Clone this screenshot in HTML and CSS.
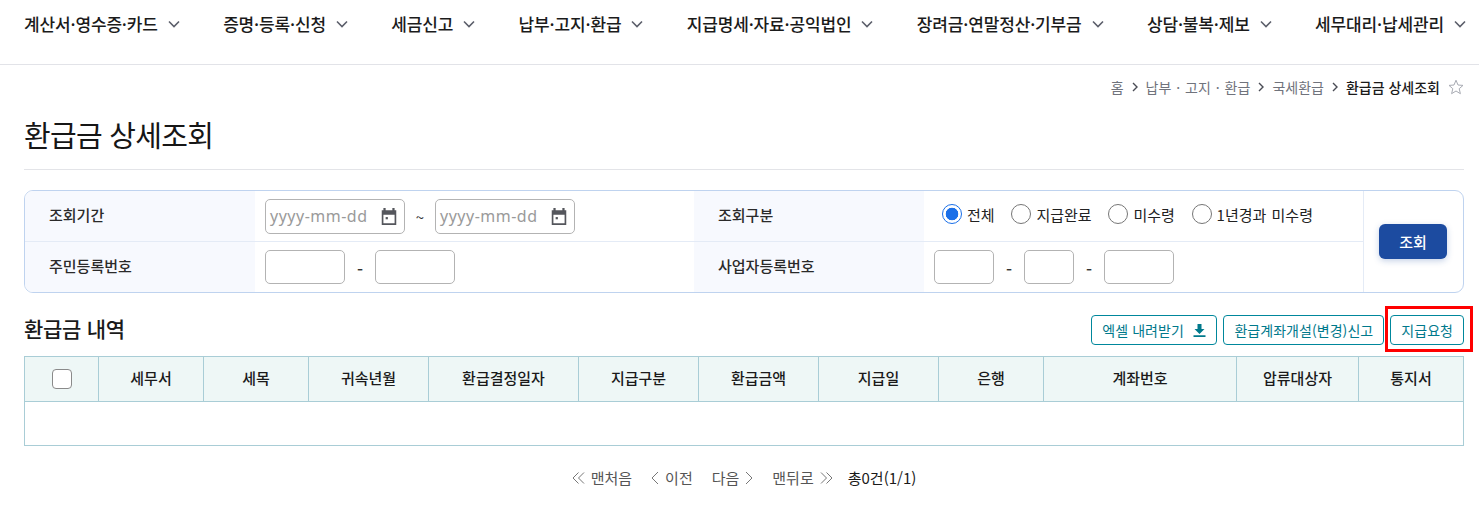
FILE: index.html
```html
<!DOCTYPE html>
<html lang="ko">
<head>
<meta charset="utf-8">
<title>환급금 상세조회</title>
<link rel="stylesheet" href="styles.css">
</head>
<body>
<header class="gnb">
  <a class="gnb-item">계산서·영수증·카드<svg class="chev" viewBox="0 0 12 8"><path d="M1 1.5 6 6.5 11 1.5"/></svg></a>
  <a class="gnb-item">증명·등록·신청<svg class="chev" viewBox="0 0 12 8"><path d="M1 1.5 6 6.5 11 1.5"/></svg></a>
  <a class="gnb-item">세금신고<svg class="chev" viewBox="0 0 12 8"><path d="M1 1.5 6 6.5 11 1.5"/></svg></a>
  <a class="gnb-item">납부·고지·환급<svg class="chev" viewBox="0 0 12 8"><path d="M1 1.5 6 6.5 11 1.5"/></svg></a>
  <a class="gnb-item">지급명세·자료·공익법인<svg class="chev" viewBox="0 0 12 8"><path d="M1 1.5 6 6.5 11 1.5"/></svg></a>
  <a class="gnb-item">장려금·연말정산·기부금<svg class="chev" viewBox="0 0 12 8"><path d="M1 1.5 6 6.5 11 1.5"/></svg></a>
  <a class="gnb-item">상담·불복·제보<svg class="chev" viewBox="0 0 12 8"><path d="M1 1.5 6 6.5 11 1.5"/></svg></a>
  <a class="gnb-item">세무대리·납세관리<svg class="chev" viewBox="0 0 12 8"><path d="M1 1.5 6 6.5 11 1.5"/></svg></a>
</header>
<main class="page">
  <nav class="crumbs">
    <span>홈</span><svg class="sep" viewBox="0 0 6 10"><path d="M1 1 5 5 1 9"/></svg>
    <span class="wide">납부 · 고지 · 환급</span><svg class="sep" viewBox="0 0 6 10"><path d="M1 1 5 5 1 9"/></svg>
    <span>국세환급</span><svg class="sep" viewBox="0 0 6 10"><path d="M1 1 5 5 1 9"/></svg>
    <strong>환급금 상세조회</strong>
    <svg class="star" viewBox="0 0 16 16"><path d="M8 1.2 10 6 15 6.4 11.2 9.7 12.4 14.7 8 12 3.6 14.7 4.8 9.7 1 6.4 6 6Z"/></svg>
  </nav>
  <h1 class="title">환급금 상세조회</h1>
  <section class="search">
    <div class="grid">
      <div class="label">조회기간</div>
      <div class="value">
        <div class="date"><span class="ph">yyyy-mm-dd</span><svg class="cal" viewBox="0 0 16 17"><path d="M3 1h2v2h6V1h2v2h1.5v13h-13V3H3ZM3 7v7.5h10V7Z" fill-rule="evenodd"/><rect x="5" y="9" width="2" height="2"/></svg></div>
        <span class="tilde">~</span>
        <div class="date"><span class="ph">yyyy-mm-dd</span><svg class="cal" viewBox="0 0 16 17"><path d="M3 1h2v2h6V1h2v2h1.5v13h-13V3H3ZM3 7v7.5h10V7Z" fill-rule="evenodd"/><rect x="5" y="9" width="2" height="2"/></svg></div>
      </div>
      <div class="label">조회구분</div>
      <div class="value radios">
        <label class="radio"><input type="radio" name="k" checked>전체</label>
        <label class="radio"><input type="radio" name="k">지급완료</label>
        <label class="radio"><input type="radio" name="k">미수령</label>
        <label class="radio"><input type="radio" name="k">1년경과 미수령</label>
      </div>
      <div class="label">주민등록번호</div>
      <div class="value">
        <input class="field w80" type="text"><span class="dash">-</span><input class="field w80" type="text">
      </div>
      <div class="label">사업자등록번호</div>
      <div class="value">
        <input class="field w60" type="text"><span class="dash">-</span><input class="field w50" type="text"><span class="dash">-</span><input class="field w70" type="text">
      </div>
    </div>
    <div class="action"><button class="go" type="button">조회</button></div>
  </section>
  <div class="bar">
    <h2 class="sub">환급금 내역</h2>
    <div class="btns">
      <button class="btn" type="button">엑셀 내려받기<svg class="dl" viewBox="0 0 12 13"><path d="M4 0h4v5h3L6 10 1 5h3ZM0 11.2h12V13H0Z"/></svg></button>
      <button class="btn" type="button">환급계좌개설(변경)신고</button>
      <button class="btn mark" type="button">지급요청</button>
    </div>
  </div>
  <table class="tbl">
    <colgroup>
      <col class="c74"><col class="c105"><col class="c105"><col class="c120"><col class="c150"><col class="c120"><col class="c120"><col class="c120"><col class="c105"><col class="c193"><col class="c122"><col>
    </colgroup>
    <thead>
      <tr>
        <th><input class="check" type="checkbox"></th><th>세무서</th><th>세목</th><th>귀속년월</th><th>환급결정일자</th><th>지급구분</th><th>환급금액</th><th>지급일</th><th>은행</th><th>계좌번호</th><th>압류대상자</th><th>통지서</th>
      </tr>
    </thead>
    <tbody><tr><td colspan="12"></td></tr></tbody>
  </table>
  <nav class="pager">
    <a class="pg"><svg class="pi" viewBox="0 0 13 14"><path d="M6.5 1.5 1 7 6.5 12.500M12 1.500 6.500 7 12 12.500"/></svg>맨처음</a>
    <a class="pg"><svg class="pi s" viewBox="0 0 8 14"><path d="M7 1 1 7 7 13"/></svg>이전</a>
    <a class="pg">다음<svg class="pi s" viewBox="0 0 8 14"><path d="M1 1 7 7 1 13"/></svg></a>
    <a class="pg">맨뒤로<svg class="pi" viewBox="0 0 13 14"><path d="M1 1.500 6.500 7 1 12.500M6.500 1.500 12 7 6.500 12.500"/></svg></a>
    <span class="total">총0건(1/1)</span>
  </nav>
</main>
</body>
</html>
```
FILE: styles.css
```css
* { box-sizing: border-box; }
html, body { margin: 0; padding: 0; }
body {
  background: #fff;
  color: #1a1a1a;
  font-family: "Noto Sans CJK KR", "Noto Sans", sans-serif;
  font-size: 15px;
  overflow: hidden;
}
.gnb {
  height: 65px;
  border-bottom: 1px solid #e2e3e8;
  display: flex;
  justify-content: space-between;
  padding: 0 13px 17px 24px;
  align-items: center;
}
.gnb-item {
  display: flex;
  align-items: center;
  gap: 10px;
  font-size: 17px;
  font-weight: 500;
  letter-spacing: -0.15px;
  color: #1b1b1b;
}
.chev { width: 12px; height: 8px; fill: none; stroke: #5c5f6b; stroke-width: 1.6; }
.page { padding: 0 15px 0 24px; }
.crumbs {
  height: 48px;
  display: flex;
  align-items: center;
  justify-content: flex-end;
  gap: 7px;
  font-size: 14px;
  letter-spacing: 0;
  color: #70737c;
  padding-bottom: 4px;
}
.crumbs strong { color: #1a1a1a; font-weight: 500; }
.wide { word-spacing: 1px; }
.sep { width: 6px; height: 10px; fill: none; stroke: #4a4c55; stroke-width: 1.4; margin: 0 1px; }
.star { width: 16px; height: 16px; fill: none; stroke: #a8abb3; stroke-width: 1; margin-left: 1px; }
.title {
  margin: 0;
  height: 57px;
  border-bottom: 1px solid #e3e4e8;
  font-size: 29px;
  font-weight: 400;
  letter-spacing: -0.7px;
  line-height: 43px;
  color: #161616;
}
.search {
  margin-top: 20px;
  height: 103px;
  border: 1px solid #bfd3ef;
  border-radius: 9px;
  display: flex;
  overflow: hidden;
}
.grid {
  width: 1338px;
  display: grid;
  grid-template-columns: 230px 439px 230px 439px;
  grid-template-rows: 1fr 1fr;
}
.label {
  background: #f7f9fe;
  padding: 0 0 3px 24px;
  display: flex;
  align-items: center;
  font-size: 15px;
  font-weight: 500;
  color: #2a2a2a;
}
.value {
  display: flex;
  align-items: center;
  padding-left: 10px;
}
.label:nth-child(-n+4), .value:nth-child(-n+4) { border-bottom: 1px solid #e4ebf6; }
.date {
  width: 140px;
  height: 35px;
  margin-top: 1px;
  border: 1px solid #b3b3b3;
  border-radius: 5px;
  display: flex;
  align-items: center;
  justify-content: space-between;
  padding: 0 6px 0 4px;
}
.ph { font-family: "Noto Sans", sans-serif; font-size: 16px; color: #9a9a9a; letter-spacing: 0.5px; }
.cal { width: 18px; height: 19px; fill: #54565c; }
.tilde { width: 30px; margin-top: 2px; text-align: center; font-size: 15px; color: #333; }
.dash { width: 30px; margin-top: 3px; text-align: center; font-size: 17px; font-weight: 500; color: #333; }
.field {
  height: 34px;
  border: 1px solid #b3b3b3;
  border-radius: 5px;
  background: #fff;
  padding: 0;
  margin: 0;
}
.w80 { width: 80px; }
.w60 { width: 60px; }
.w50 { width: 50px; }
.w70 { width: 70px; }
.radios { padding: 0 0 3px 18px; gap: 16.8px; }
.radio {
  display: flex;
  align-items: center;
  gap: 5px;
  font-size: 15px;
  word-spacing: 1px;
  color: #222;
}
.radio input {
  appearance: none;
  width: 20px;
  height: 20px;
  margin: 0;
  border: 1px solid #767676;
  border-radius: 50%;
  background: #fff;
}
.radio input:checked {
  border-color: #1a6fe8;
  background: radial-gradient(circle, #1a6fe8 0 6px, #fff 6.6px);
}
.action {
  flex: 1;
  border-left: 1px solid #e4ebf6;
  display: flex;
  align-items: center;
  justify-content: center;
  padding-right: 1px;
}
.go {
  width: 68px;
  height: 35px;
  border: 0;
  border-radius: 6px;
  background: #1c4ba0;
  color: #fff;
  font: 500 15px "Noto Sans CJK KR", sans-serif;
  box-shadow: 0 2px 6px rgba(28, 75, 160, .25);
  padding: 0;
}
.bar {
  height: 63px;
  display: flex;
  align-items: center;
  justify-content: space-between;
  padding-top: 11px;
}
.sub { margin: 0 0 5px; font-size: 21px; font-weight: 500; letter-spacing: -0.3px; color: #1a1a1a; }
.btns { display: flex; gap: 6px; }
.btn {
  position: relative;
  height: 30px;
  padding: 0 10px;
  border: 1px solid #00879c;
  border-radius: 4px;
  background: #fff;
  color: #00798c;
  font: 400 14px "Noto Sans CJK KR", sans-serif;
  letter-spacing: 0.05px;
  display: flex;
  align-items: center;
  gap: 9.500px;
}
.dl { width: 13px; height: 13px; fill: #00798c; }
.mark::after {
  content: "";
  position: absolute;
  left: -6px;
  right: -10px;
  top: -10px;
  bottom: -8px;
  border: 3px solid #f00;
}
.tbl {
  width: 1440px;
  border-collapse: collapse;
  table-layout: fixed;
}
.c74 { width: 74px; } .c105 { width: 105px; } .c120 { width: 120px; } .c150 { width: 150px; }
.c193 { width: 193px; } .c122 { width: 122px; }
.tbl th, .tbl td { border: 1px solid #a9cdd6; padding: 0; }
.tbl th {
  height: 45px;
  padding-bottom: 3px;
  background: #eef7f6;
  font-size: 15px;
  font-weight: 500;
  color: #1a1a1a;
}
.tbl th:first-child { padding-bottom: 0; }
.tbl td { height: 44px; }
.check {
  appearance: none;
  display: block;
  width: 20px;
  height: 20px;
  margin: 0 auto;
  border: 1px solid #8a8a8a;
  border-radius: 4px;
  background: #fff;
}
.pager {
  margin-top: 21px;
  display: flex;
  justify-content: center;
  align-items: center;
  gap: 19px;
  font-size: 15px;
  color: #555;
}
.pg { display: flex; align-items: center; gap: 6px; }
.pi { width: 13px; height: 14px; fill: none; stroke: #777; stroke-width: 1; }
.pi.s { width: 8px; }
.total { color: #1a1a1a; margin-left: -4px; }
```
